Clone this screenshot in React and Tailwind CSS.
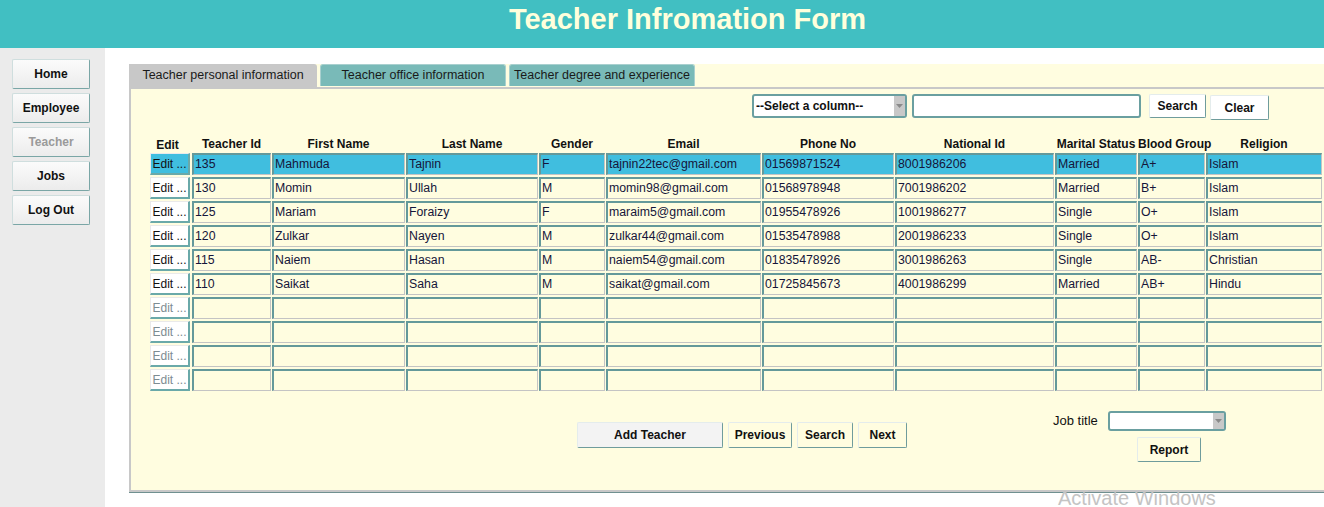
import React from "react"

const font = { fontFamily: '"Liberation Sans", Arial, sans-serif' }

const teachers = [
  ["135", "Mahmuda", "Tajnin", "F", "tajnin22tec@gmail.com", "01569871524", "8001986206", "Married", "A+", "Islam"],
  ["130", "Momin", "Ullah", "M", "momin98@gmail.com", "01568978948", "7001986202", "Married", "B+", "Islam"],
  ["125", "Mariam", "Foraizy", "F", "maraim5@gmail.com", "01955478926", "1001986277", "Single", "O+", "Islam"],
  ["120", "Zulkar", "Nayen", "M", "zulkar44@gmail.com", "01535478988", "2001986233", "Single", "O+", "Islam"],
  ["115", "Naiem", "Hasan", "M", "naiem54@gmail.com", "01835478926", "3001986263", "Single", "AB-", "Christian"],
  ["110", "Saikat", "Saha", "M", "saikat@gmail.com", "01725845673", "4001986299", "Married", "AB+", "Hindu"],
]

const columns = ["Teacher Id", "First Name", "Last Name", "Gender", "Email", "Phone No", "National Id", "Marital Status", "Blood Group", "Religion"]

const gridCols = "grid grid-cols-[41px_79px_133px_132px_66px_155px_132px_159px_82px_67px_116px] gap-x-px"

function SideButton({ label, disabled }) {
  return (
    <button
      className={`h-[30px] w-[78px] rounded-[2px] border border-[#cfdede] border-r-[#7aa6a6] border-b-[#7aa6a6] bg-gradient-to-b from-[#fbfbfb] to-[#ececec] text-[12px] font-bold ${
        disabled ? "text-[#9a9a9a]" : "text-[#111]"
      }`}
    >
      {label}
    </button>
  )
}

function FormButton({ label, className = "" }) {
  return (
    <button
      className={`rounded-[2px] border border-[#e4ecec] border-r-[#6f9c9c] border-b-[#6f9c9c] text-[12px] font-bold text-[#111] ${className}`}
    >
      {label}
    </button>
  )
}

function Combo({ label, className = "" }) {
  return (
    <div className={`flex items-stretch rounded-[3px] border-2 border-[#6a9fa0] bg-white ${className}`}>
      <div className="flex flex-1 items-center pl-[2px] text-[12px] font-bold text-[#111]">{label}</div>
      <div className="flex w-[11px] items-center justify-center bg-[#c8c8c8]">
        <svg width="7" height="4" viewBox="0 0 7 4">
          <path d="M0 0h7L3.5 4z" fill="#8a8a8a" />
        </svg>
      </div>
    </div>
  )
}

function Cell({ value, selected }) {
  return (
    <div
      className={`flex h-[22px] items-center overflow-hidden whitespace-nowrap border-t-2 border-l-2 border-r border-b border-t-[#64999a] border-l-[#64999a] border-r-[#c4c4c4] border-b-[#c4c4c4] pl-[1px] text-[12.3px] text-[#15153a] ${
        selected ? "bg-[#40bedf]" : "bg-[#fffde0]"
      }`}
    >
      {value}
    </div>
  )
}

function Row({ data, selected }) {
  const empty = !data
  return (
    <div className={gridCols}>
      <button
        className={`h-[22px] w-[40px] border border-[#eaeaea] border-r-2 border-b-2 border-r-[#6aa9a9] border-b-[#6aa9a9] text-[12px] ${
          selected ? "bg-[#40bedf] text-[#111]" : "bg-white"
        } ${empty ? "text-[#7d8c92]" : "text-[#111]"}`}
      >
        Edit ...
      </button>
      {(data || Array(10).fill("")).map((v, i) => (
        <Cell key={i} value={v} selected={selected} />
      ))}
    </div>
  )
}

export default function App() {
  const rows = [...teachers, null, null, null, null]

  return (
    <div className="relative flex h-[507px] w-[1324px] flex-col overflow-hidden bg-white" style={font}>
      <div className="h-12 shrink-0 bg-[#41bfc2] pl-[51px] pt-[5px] text-center text-[29px] font-bold leading-[29px] text-[#ffffdc]">
        Teacher Infromation Form
      </div>

      <div className="flex flex-1">
        <div className="flex w-[105px] shrink-0 flex-col gap-[4px] bg-[#ebebeb] pl-3 pt-[11px]">
          <SideButton label="Home" />
          <SideButton label="Employee" />
          <SideButton label="Teacher" disabled />
          <SideButton label="Jobs" />
          <SideButton label="Log Out" />
        </div>

        <div className="flex-1 pl-6 pt-4">
          <div className="w-[1220px] bg-[#fffde0]">
            <div className="flex h-[23px] items-end gap-[3px] bg-[#fffde0] text-[12.5px] text-[#1a1a1a]">
              <div className="flex h-[23px] w-[188px] items-center justify-center rounded-tr-[3px] bg-[#c8c8c8]">
                Teacher personal information
              </div>
              <div className="flex h-[22px] w-[186px] items-center justify-center self-start rounded-t-[3px] border border-b-0 border-[#a9d0cf] bg-[#79bab8]">
                Teacher office information
              </div>
              <div className="flex h-[22px] w-[186px] items-center justify-center self-start rounded-t-[3px] border border-b-0 border-[#a9d0cf] bg-[#79bab8]">
                Teacher degree and experience
              </div>
            </div>

            <div className="h-[405px] border-t-2 border-l-2 border-b-2 border-[#c8c8c8] pl-[19px] pt-[5px] shadow-[0_1px_0_#6f9090]">
              <div className="flex h-[26px] items-start">
                <Combo label="--Select a column--" className="ml-[602px] h-[24px] w-[155px]" />
                <div className="ml-[5px] h-[24px] w-[229px] rounded-[3px] border-2 border-[#6a9fa0] bg-white" />
                <FormButton label="Search" className="ml-[8px] h-[24px] w-[57px] bg-white" />
                <FormButton label="Clear" className="ml-[4px] mt-px h-[25px] w-[59px] bg-white" />
              </div>

              <div className={`${gridCols} mt-[13px] h-[16px] items-center text-[12px] font-bold text-[#111]`}>
                <div className="pt-[3px] pr-[6px] text-center">Edit</div>
                {columns.map((c) => (
                  <div key={c} className="whitespace-nowrap text-center">
                    {c}
                  </div>
                ))}
              </div>

              <div className="mt-[4px] flex flex-col gap-y-[2px]">
                {rows.map((r, i) => (
                  <Row key={i} data={r} selected={i === 0} />
                ))}
              </div>

              <div className="flex items-start">
                <div className="ml-[427px] mt-[31px] flex gap-[5px]">
                  <FormButton label="Add Teacher" className="h-[26px] w-[146px] bg-[#f3f3f3]" />
                  <FormButton label="Previous" className="h-[26px] w-[64px] bg-[#fffde0]" />
                  <FormButton label="Search" className="h-[26px] w-[56px] bg-[#fffde0]" />
                  <FormButton label="Next" className="h-[26px] w-[49px] bg-[#fffde0]" />
                </div>
                <div className="ml-[146px] mt-[20px] flex flex-col">
                  <div className="flex items-center gap-[10px]">
                    <span className="text-[13px] text-[#111]">Job title</span>
                    <Combo label="" className="h-[20px] w-[118px]" />
                  </div>
                  <FormButton label="Report" className="ml-[84px] mt-[6px] h-[25px] w-[64px] bg-[#fffde0]" />
                </div>
              </div>
            </div>
          </div>
        </div>
      </div>

      <div className="pointer-events-none absolute left-[1058px] top-[483px] text-[20px] text-[#c4c4c4]">
        Activate Windows
      </div>
    </div>
  )
}
